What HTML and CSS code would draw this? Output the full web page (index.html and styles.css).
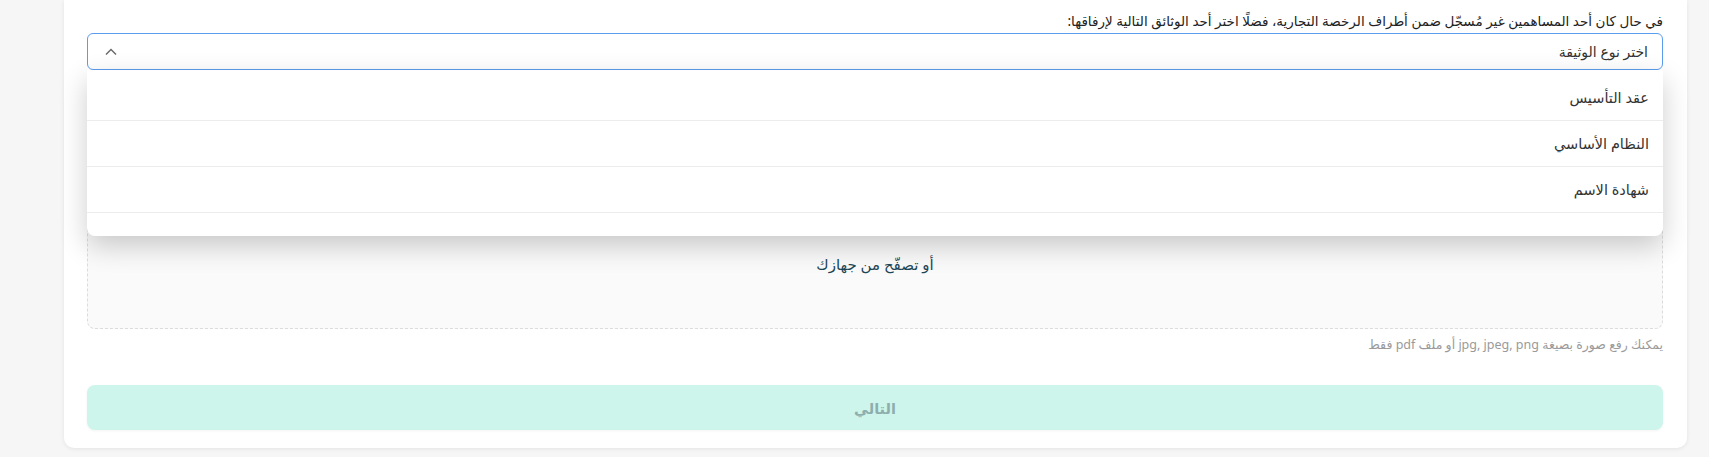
FILE: index.html
```html
<!DOCTYPE html>
<html lang="ar" dir="rtl">
<head>
<meta charset="utf-8">
<title>رفع الوثيقة</title>
<link rel="stylesheet" href="styles.css">
</head>
<body>
<main class="card">
  <p class="field-label">في حال كان أحد المساهمين غير مُسجّل ضمن أطراف الرخصة التجارية، فضلًا اختر أحد الوثائق التالية لإرفاقها:</p>
  <div class="select-wrap">
    <div class="select">
      <span class="select-value">اختر نوع الوثيقة</span>
      <svg class="chevron" width="12" height="8" viewBox="0 0 12 8"><polyline points="1,6.5 6,1.5 11,6.5" fill="none" stroke="#666" stroke-width="1.4"/></svg>
    </div>
    <ul class="menu">
      <li class="menu-item">عقد التأسيس</li>
      <li class="menu-item">النظام الأساسي</li>
      <li class="menu-item">شهادة الاسم</li>
    </ul>
  </div>
  <div class="upload">
    <span class="browse">أو تصفّح من جهازك</span>
  </div>
  <p class="hint">يمكنك رفع صورة بصيغة jpg, jpeg, png أو ملف pdf فقط</p>
  <button class="next" type="button">التالي</button>
</main>
</body>
</html>
```

FILE: styles.css
```css
* { box-sizing: border-box; }
html, body { margin: 0; padding: 0; }
body {
  background: #f6f6f6;
  font-family: "Noto Sans", "DejaVu Sans", sans-serif;
  height: 457px;
  overflow: hidden;
}
.card {
  margin: 0 22px 0 64px;
  background: #fff;
  border-radius: 0 0 10px 10px;
  box-shadow: 0 1px 4px rgba(0,0,0,0.08);
  padding: 11px 24px 18px 23px;
  display: flex;
  flex-direction: column;
}
.field-label {
  margin: 0 0 2px;
  font-size: 13.5px;
  line-height: 20px;
  color: #222;
}
.select-wrap { position: relative; }
.select {
  height: 37px;
  border: 1px solid #5b9cee;
  border-radius: 6px;
  display: flex;
  align-items: center;
  justify-content: space-between;
  padding: 0 14px 0 17px;
}
.select-value { font-size: 14px; color: #333; }
.chevron { display: block; }
.menu {
  position: absolute;
  top: 100%;
  left: 0;
  right: 0;
  margin: 0;
  padding: 5px 0 23px;
  list-style: none;
  background: #fff;
  border-radius: 0 0 8px 8px;
  box-shadow: 0 10px 28px rgba(0,0,0,0.2);
  z-index: 5;
}
.menu-item {
  height: 46px;
  display: flex;
  align-items: center;
  padding: 0 14px 2px;
  font-size: 14.5px;
  color: #333;
  border-bottom: 1px solid #ececec;
}
.upload {
  margin-top: 20px;
  height: 239px;
  background: #fafafa;
  border: 1px dashed #dcdcdc;
  border-radius: 8px;
  display: flex;
  justify-content: center;
  padding-top: 162px;
}
.browse {
  font-size: 15px;
  line-height: 22px;
  color: #1d4656;
}
.hint {
  margin: 7px 0 0;
  font-size: 12.5px;
  line-height: 18px;
  color: #9a9a9a;
}
.next {
  margin-top: 31px;
  height: 45px;
  border: none;
  border-radius: 8px;
  background: #cdf5eb;
  color: #8eaeae;
  font-family: inherit;
  font-size: 14.5px;
  font-weight: 600;
  box-shadow: 0 1px 3px rgba(0,0,0,0.05);
}
```
